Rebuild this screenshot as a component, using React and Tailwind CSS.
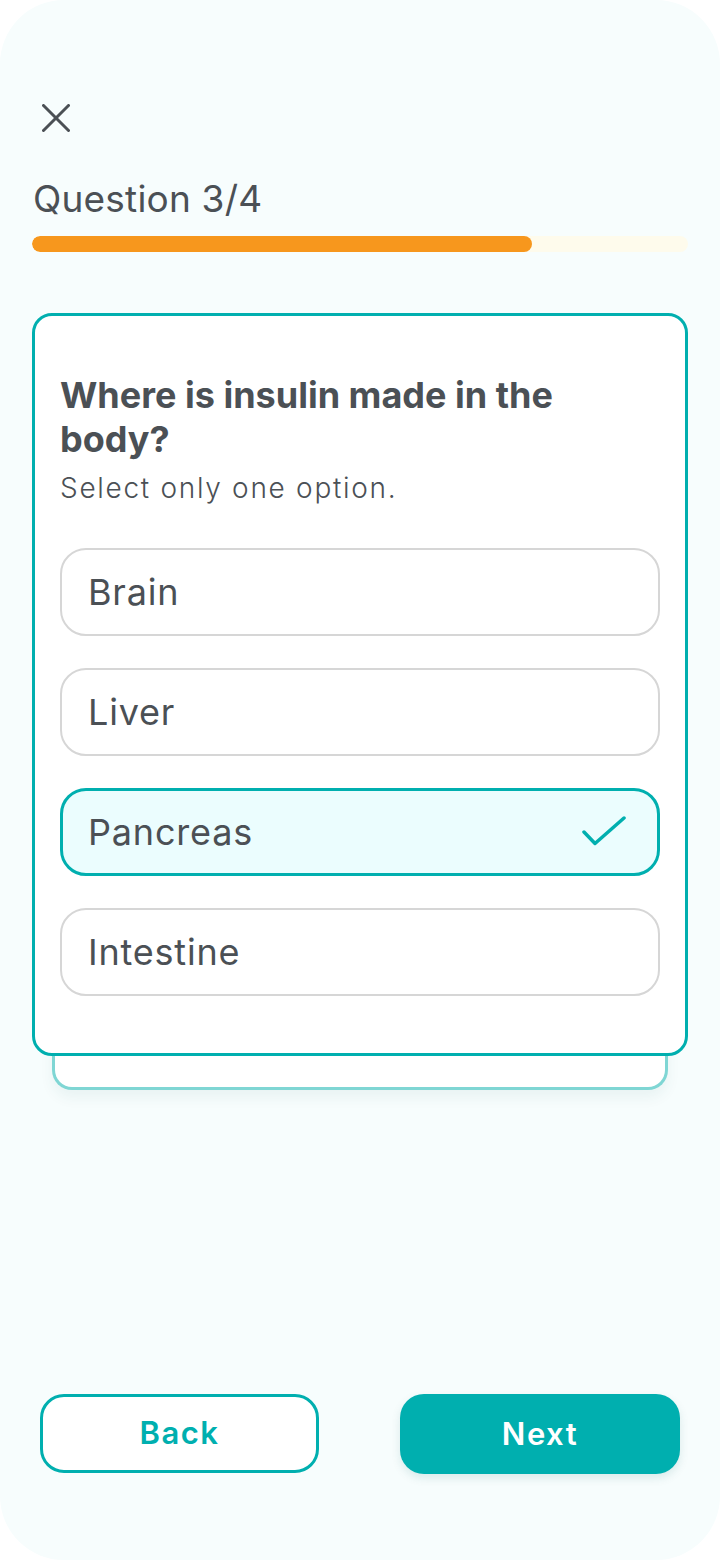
import React from "react";

const options = ["Brain", "Liver", "Pancreas", "Intestine"];
const selected = "Pancreas";

export default function App() {
  return (
    <div className="w-[720px] h-[1560px] bg-white" style={{ fontFamily: "Inter, 'Noto Sans', sans-serif" }}>
      <div className="h-full rounded-[64px] bg-[#f7fdfd] px-[32px] flex flex-col text-[#4b5055]">
        <div className="mt-[104px] ml-[10px]">
          <svg width="28" height="28" viewBox="0 0 28 28" fill="none" stroke="#4b5055" strokeWidth="3" strokeLinecap="round">
            <line x1="1.5" y1="1.5" x2="26.5" y2="26.5" />
            <line x1="26.5" y1="1.5" x2="1.5" y2="26.5" />
          </svg>
        </div>
        <div className="mt-[47px] text-[37px] leading-[40px] ml-[1px] tracking-[0.2px]">Question 3/4</div>
        <div className="mt-[17px] h-[16px] rounded-full bg-[#fefbec] overflow-hidden">
          <div className="h-full rounded-full bg-[#f7971d]" style={{ width: "76.2%" }} />
        </div>

        <div className="mt-[61px] flex flex-col">
          <div className="relative z-10 rounded-[20px] border-[3px] border-[#00afaf] bg-white px-[25px] pt-[57px] pb-[57px]">
            <div className="max-w-[530px] text-[36px] leading-[44px] font-bold tracking-[0px]">Where is insulin made in the body?</div>
            <div className="mt-[9px] text-[28px] leading-[36px] font-light tracking-[1.7px]">Select only one option.</div>
            <div className="mt-[42px] flex flex-col gap-[32px]">
              {options.map((o) =>
                o === selected ? (
                  <div key={o} className="h-[88px] rounded-[26px] border-[3px] border-[#00afaf] bg-[#ebfdfe] flex items-center justify-between pl-[25px] pr-[31px]">
                    <span className="text-[36px] tracking-[0.8px]">{o}</span>
                    <svg width="44" height="32" viewBox="0 0 44 32" fill="none" stroke="#00afaf" strokeWidth="3.5" strokeLinecap="round" strokeLinejoin="round">
                      <path d="M2 16 L13 27.5 L42 2" />
                    </svg>
                  </div>
                ) : (
                  <div key={o} className="h-[88px] rounded-[26px] border-2 border-[#d6d6d6] bg-white flex items-center pl-[26px]">
                    <span className="text-[36px] tracking-[0.8px]">{o}</span>
                  </div>
                )
              )}
            </div>
          </div>
          <div className="mx-[20px] mt-[-40px] h-[74px] rounded-b-[20px] border-[3px] border-t-0 border-[#7fd6d4] bg-white shadow-[0_8px_14px_rgba(0,80,80,0.06)]" />
        </div>

        <div className="mt-auto mb-[86px] mx-[8px] flex justify-between">
          <button className="w-[279px] h-[79px] rounded-[24px] border-[3px] border-[#00afaf] bg-white text-[#00afaf] text-[31px] font-semibold tracking-[1.5px]">Back</button>
          <button className="w-[280px] h-[80px] rounded-[24px] bg-[#00afaf] text-white text-[31px] font-semibold tracking-[1.5px] shadow-[0_4px_10px_rgba(0,100,100,0.12)]">Next</button>
        </div>
      </div>
    </div>
  );
}
